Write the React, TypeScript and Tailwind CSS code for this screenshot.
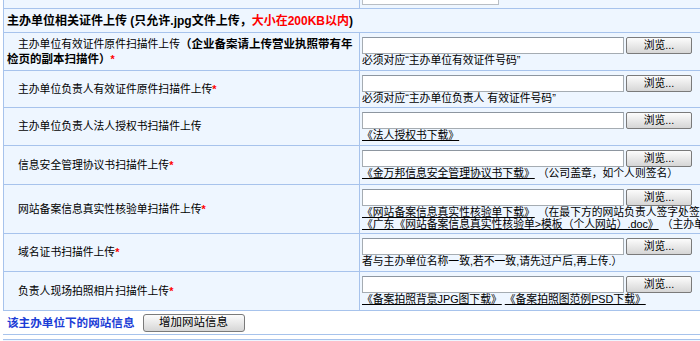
import React from 'react';

type UploadRow = {
	label: React.ReactNode;
	required?: boolean;
	height: string;
	hint: React.ReactNode;
};

const Star = () => <span className="font-bold text-[#ff0000]">*</span>;

const DocLink = ({ children }: { children: React.ReactNode }) => (
	<a href="#" className="text-black underline underline-offset-[1px]">
		{children}
	</a>
);

const BrowseField = () => (
	<div className="flex h-[17px] gap-[2px]">
		<div className="w-[262px] border border-[#a5acb2] border-t-[#8d96a0] bg-white" />
		<button className="w-[66px] rounded-[2px] border border-[#7a7a7a] bg-linear-to-b from-[#fcfcfc] to-[#d6d6d6] text-[10.8px] leading-none text-black">
			浏览...
		</button>
	</div>
);

const rows: UploadRow[] = [
	{
		label: (
			<>
				主办单位有效证件原件扫描件上传
				<span className="text-[11.5px] font-bold">（企业备案请上传营业执照带有年检页的副本扫描件）</span>
			</>
		),
		required: true,
		height: 'h-[38px]',
		hint: <div>必须对应“主办单位有效证件号码”</div>,
	},
	{
		label: '主办单位负责人有效证件原件扫描件上传',
		required: true,
		height: 'h-[37px]',
		hint: <div>必须对应“主办单位负责人 有效证件号码”</div>,
	},
	{
		label: '主办单位负责人法人授权书扫描件上传',
		height: 'h-[38px]',
		hint: (
			<div>
				<DocLink>《法人授权书下载》</DocLink>
			</div>
		),
	},
	{
		label: '信息安全管理协议书扫描件上传',
		required: true,
		height: 'h-[39px]',
		hint: (
			<div>
				<DocLink>《金万邦信息安全管理协议书下载》</DocLink> （公司盖章，如个人则签名）
			</div>
		),
	},
	{
		label: '网站备案信息真实性核验单扫描件上传',
		required: true,
		height: 'h-[49px]',
		hint: (
			<>
				<div>
					<DocLink>《网站备案信息真实性核验单下载》</DocLink> （在最下方的网站负责人签字处签字）
				</div>
				<div>
					<DocLink>《广东《网站备案信息真实性核验单&gt;模板（个人网站）.doc》</DocLink> （主办单位为个人）
				</div>
			</>
		),
	},
	{
		label: '域名证书扫描件上传',
		required: true,
		height: 'h-[38px]',
		hint: <div>者与主办单位名称一致,若不一致,请先过户后,再上传.）</div>,
	},
	{
		label: '负责人现场拍照相片扫描件上传',
		required: true,
		height: 'h-[39px]',
		hint: (
			<div>
				<DocLink>《备案拍照背景JPG图下载》</DocLink> <DocLink>《备案拍照图范例PSD下载》</DocLink>
			</div>
		),
	},
];

export default function App() {
	return (
		<div className="h-[341px] w-[700px] overflow-hidden bg-white font-['Liberation_Sans','Noto_Sans_CJK_SC',sans-serif] text-black">
			<div className="w-[780px]">
				<div className="ml-[3px] border-b border-l border-[#a7c3ec] bg-[#eef6ff]">
					{/* tail of the previous row */}
					<div className="flex h-[8px]">
						<div className="w-[356px] shrink-0 border-r border-[#a7c3ec]" />
						<div className="pl-[2px]">
							<div className="h-[5px] w-[137px] border-x border-b border-[#b9bec4] bg-white" />
						</div>
					</div>

					<div className="flex h-[24px] items-center border-t border-[#a7c3ec] pl-[3px] text-[12px] font-bold">
						主办单位相关证件上传 (只允许.jpg文件上传，<span className="text-[#ff0000]">大小在200KB以内</span>)
					</div>

					{rows.map((row, i) => (
						<div key={i} className={`flex border-t border-[#a7c3ec] ${row.height}`}>
							<div className="flex w-[356px] shrink-0 items-center border-r border-[#a7c3ec] pr-[6px] pl-[3px] text-[10.8px] leading-[15px]">
								<div className="indent-[11px]">
									{row.label}
									{row.required && <Star />}
								</div>
							</div>
							<div className="min-w-0 flex-1 overflow-hidden whitespace-nowrap pt-[4px] pl-[2px] text-[10.8px] leading-[12px]">
								<BrowseField />
								{row.hint}
							</div>
						</div>
					))}
				</div>

				<div className="ml-[3px] flex h-[24px] items-center gap-[8px] border-b border-[#a7c3ec] pl-[4px]">
					<span className="text-[11.6px] font-bold text-[#1c3dd6]">该主办单位下的网站信息</span>
					<button className="h-[18px] w-[102px] rounded-[3px] border border-[#7a7a7a] bg-linear-to-b from-[#fcfcfc] to-[#d6d6d6] text-[11.5px] leading-none text-black">
						增加网站信息
					</button>
				</div>

				<div className="mt-[4px] ml-[3px] h-[8px] border-t border-[#a7c3ec] bg-[#eef6ff]" />
			</div>
		</div>
	);
}
